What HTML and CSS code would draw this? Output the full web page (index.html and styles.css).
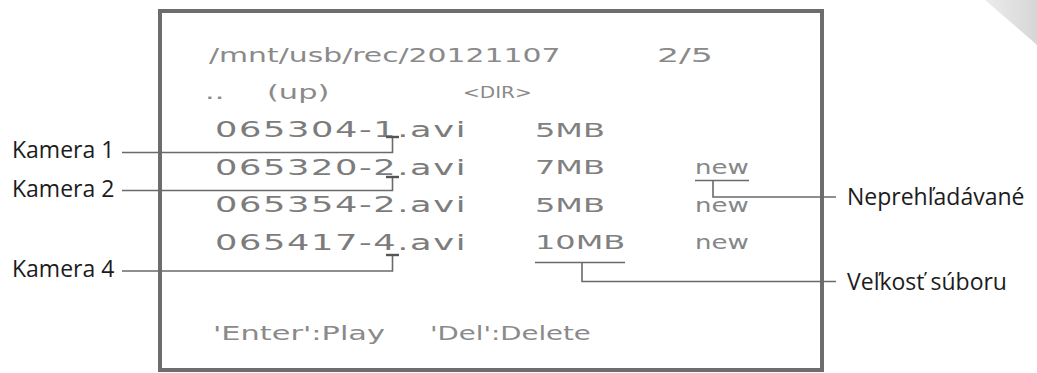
FILE: index.html
```html
<!DOCTYPE html>
<html lang="sk">
<head>
<meta charset="utf-8">
<title>Prehrávanie záznamov</title>
<link rel="stylesheet" href="styles.css">
</head>
<body>
<div class="page">
  <div class="labels-left">
    <div class="label k1">Kamera 1</div>
    <div class="label k2">Kamera 2</div>
    <div class="label k4">Kamera 4</div>
  </div>

  <div class="screen">
    <div class="row row-head">
      <span class="t path">/mnt/usb/rec/20121107</span>
      <span class="t page-no">2/5</span>
    </div>
    <div class="row row-up">
      <span class="t dots">..</span>
      <span class="t up">(up)</span>
      <span class="t dir">&lt;DIR&gt;</span>
    </div>
    <div class="row row-file">
      <span class="t name">065304-1.avi</span>
      <span class="t size">5MB</span>
    </div>
    <div class="row row-file">
      <span class="t name">065320-2.avi</span>
      <span class="t size">7MB</span>
      <span class="t new">new</span>
    </div>
    <div class="row row-file">
      <span class="t name">065354-2.avi</span>
      <span class="t size">5MB</span>
      <span class="t new">new</span>
    </div>
    <div class="row row-file">
      <span class="t name">065417-4.avi</span>
      <span class="t size">10MB</span>
      <span class="t new">new</span>
    </div>
    <div class="row row-foot">
      <span class="t enter">'Enter':Play</span>
      <span class="t del">'Del':Delete</span>
    </div>
  </div>

  <div class="labels-right">
    <div class="label n1">Neprehľadávané</div>
    <div class="label n2">Veľkosť súboru</div>
  </div>

  <svg class="leaders" width="1037" height="373" viewBox="0 0 1037 373" aria-hidden="true">
    <defs>
      <linearGradient id="curl" x1="0" y1="0" x2="1" y2="0">
        <stop offset="0" stop-color="#ececec"/>
        <stop offset="1" stop-color="#d6d6d6"/>
      </linearGradient>
    </defs>
    <polygon points="985,0 1037,0 1037,45" fill="url(#curl)"/>
    <g fill="none" stroke="#6a6a6a" stroke-width="1.6">
      <path d="M122 152.5 H392.5 V137"/>
      <path d="M122 190.5 H392.5 V177"/>
      <path d="M122 271 H392.5 V255"/>
      <path d="M695 180.5 H749"/>
      <path d="M713 180.5 V197 H836"/>
      <path d="M535 262.5 H625"/>
      <path d="M582 262.5 V281.5 H836"/>
    </g>
    <g fill="none" stroke="#555" stroke-width="2.4">
      <path d="M386 137 H399"/>
      <path d="M386 177 H399"/>
      <path d="M386 255 H399"/>
    </g>
  </svg>
</div>
</body>
</html>
```

FILE: styles.css
```css
html, body {
  margin: 0;
  padding: 0;
  background: #ffffff;
}

.page {
  position: relative;
  width: 1037px;
  height: 373px;
  box-sizing: border-box;
  padding-top: 9px;
  display: grid;
  grid-template-columns: 158px 666px 1fr;
  align-items: start;
  overflow: hidden;
}

.label {
  font-family: "Open Sans", "Noto Sans", sans-serif;
  font-size: 23px;
  line-height: 30px;
  color: #1c1c1c;
  white-space: nowrap;
}

.labels-left {
  display: flex;
  flex-direction: column;
  padding-left: 12px;
}

.k1 { margin-top: 125px; }
.k2 { margin-top: 9px; }
.k4 { margin-top: 50px; }

.labels-right {
  display: flex;
  flex-direction: column;
  padding-left: 23px;
}

.n1 { margin-top: 172px; }
.n2 { margin-top: 55px; }

.screen {
  height: 363px;
  box-sizing: border-box;
  border: 4px solid #6d6d6d;
  padding-top: 23px;
  display: flex;
  flex-direction: column;
  font-family: "DejaVu Sans", "Liberation Sans", sans-serif;
  color: #808080;
}

.row {
  display: flex;
  align-items: center;
  height: 37.5px;
}

.row-foot {
  height: 30px;
  margin-top: 57px;
}

.t {
  display: inline-block;
  flex: none;
  white-space: pre;
  transform: scaleX(1.6);
  transform-origin: 0 50%;
}

.row-head { padding-left: 47px; font-size: 19px; color: #8a8a8a; }
.path { width: 448px; transform: scaleX(1.57); }
.page-no { transform: scaleX(1.83); }

.row-up { padding-left: 43px; font-size: 19px; color: #8a8a8a; }
.dots { width: 62px; }
.up { width: 196px; }
.dir { font-size: 16px; transform: scaleX(1.25); }

.row-file { padding-left: 53px; }
.name {
  width: 320px;
  font-size: 22px;
  letter-spacing: 1px;
  color: #7c7c7c;
}
.size { width: 160px; font-size: 20px; }
.new { font-size: 20px; transform: scaleX(1.3); color: #868686; }

.row-foot { padding-left: 51px; font-size: 19px; color: #8a8a8a; }
.enter { width: 217px; }
.del { transform: scaleX(1.45); }

.leaders {
  position: absolute;
  left: 0;
  top: 0;
  pointer-events: none;
}
```
